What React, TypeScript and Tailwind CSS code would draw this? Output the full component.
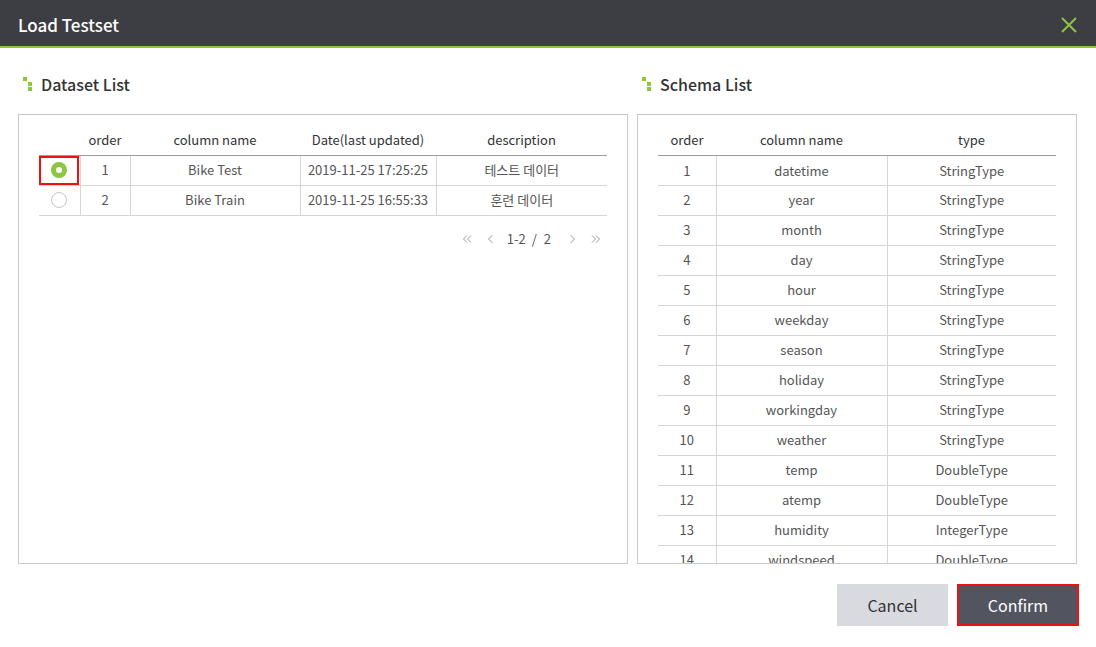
import React from "react";

const datasets = [
  { order: 1, name: "Bike Test", date: "2019-11-25 17:25:25", desc: "테스트 데이터", selected: true },
  { order: 2, name: "Bike Train", date: "2019-11-25 16:55:33", desc: "훈련 데이터", selected: false },
];

const schema = [
  ["datetime", "StringType"],
  ["year", "StringType"],
  ["month", "StringType"],
  ["day", "StringType"],
  ["hour", "StringType"],
  ["weekday", "StringType"],
  ["season", "StringType"],
  ["holiday", "StringType"],
  ["workingday", "StringType"],
  ["weather", "StringType"],
  ["temp", "DoubleType"],
  ["atemp", "DoubleType"],
  ["humidity", "IntegerType"],
  ["windspeed", "DoubleType"],
  ["casual", "IntegerType"],
];

function TitleMark() {
  return (
    <svg width="10" height="14" viewBox="0 0 10 14" className="shrink-0">
      <rect x="0" y="0" width="4" height="4" fill="#8dc63f" />
      <rect x="5" y="5" width="4" height="4" fill="#8dc63f" />
      <rect x="5" y="10" width="4" height="4" fill="#8dc63f" />
    </svg>
  );
}

function SectionTitle({ label }: { label: string }) {
  return (
    <div className="flex h-[22px] items-center gap-[8px] pl-[5px]">
      <TitleMark />
      <h2 className="text-[16px] font-medium text-[#333]">{label}</h2>
    </div>
  );
}

function Radio({ checked }: { checked: boolean }) {
  if (checked) {
    return (
      <span className="flex h-[16px] w-[16px] items-center justify-center rounded-full bg-[#8dc63f]">
        <span className="h-[6px] w-[6px] rounded-full bg-white" />
      </span>
    );
  }
  return <span className="block h-[16px] w-[16px] rounded-full border border-[#c4c4c4] bg-white" />;
}

function Arrow({ d }: { d: string }) {
  return (
    <svg width="12" height="12" viewBox="0 0 12 12" fill="none" stroke="#9a9a9a" strokeWidth="1">
      <path d={d} />
    </svg>
  );
}

const th = "h-[31px] border-b border-[#9d9d9d] p-0 text-center text-[13px] font-normal text-[#333]";
const td = "h-[30px] border-b border-[#d6d6d6] p-0 text-center text-[13px] text-[#555]";

export default function App() {
  return (
    <div
      className="h-[647px] w-[1096px] overflow-hidden bg-white"
      style={{ fontFamily: '"Noto Sans CJK KR", "Noto Sans", sans-serif' }}
    >
      <header className="flex h-[48px] items-center justify-between border-b-2 border-[#8dc63f] bg-[#3d3e44] pl-[18px] pr-[18px] pt-[3px]">
        <h1 className="text-[17px] font-medium text-white">Load Testset</h1>
        <svg width="18" height="18" viewBox="0 0 18 18" stroke="#8dc63f" strokeWidth="2" fill="none">
          <path d="M2 2 L16 16 M16 2 L2 16" />
        </svg>
      </header>

      <div className="flex gap-[9px] px-[18px] pt-[25px]">
        <section className="w-[610px]">
          <SectionTitle label="Dataset List" />
          <div className="mt-[19px] h-[450px] border border-[#c9c9c9] px-[20px] pt-[9px]">
            <table className="w-full table-fixed border-collapse">
              <colgroup>
                <col className="w-[41px]" />
                <col className="w-[50px]" />
                <col className="w-[170px]" />
                <col className="w-[136px]" />
                <col className="w-[171px]" />
              </colgroup>
              <thead>
                <tr>
                  <th className={th}></th>
                  <th className={th}>order</th>
                  <th className={th}>column name</th>
                  <th className={th}>Date(last updated)</th>
                  <th className={th}>description</th>
                </tr>
              </thead>
              <tbody>
                {datasets.map((r) => (
                  <tr key={r.order}>
                    <td className={td}>
                      <div
                        className={
                          r.selected
                            ? "mx-auto flex h-[29px] w-[40px] items-center justify-center border-2 border-[#ee1111]"
                            : "mx-auto flex h-[29px] w-[40px] items-center justify-center"
                        }
                      >
                        <Radio checked={r.selected} />
                      </div>
                    </td>
                    <td className={`${td} border-l`}>{r.order}</td>
                    <td className={`${td} border-l`}>{r.name}</td>
                    <td className={`${td} border-l`}>{r.date}</td>
                    <td className={`${td} border-l`}>{r.desc}</td>
                  </tr>
                ))}
              </tbody>
            </table>

            <div className="mt-[13px] flex h-[20px] items-center justify-end pr-[5px] text-[13px] text-[#555]">
              <Arrow d="M6 2.5 L2.5 6 L6 9.5 M10 2.5 L6.5 6 L10 9.5" />
              <span className="ml-[12px]">
                <Arrow d="M7.5 2 L3.5 6 L7.5 10" />
              </span>
              <span className="ml-[10px]">1-2</span>
              <span className="ml-[6px]">/</span>
              <span className="ml-[7px]">2</span>
              <span className="ml-[15px]">
                <Arrow d="M4.5 2 L8.5 6 L4.5 10" />
              </span>
              <span className="ml-[12px]">
                <Arrow d="M2 2.5 L5.5 6 L2 9.5 M6 2.5 L9.5 6 L6 9.5" />
              </span>
            </div>
          </div>
        </section>

        <section className="w-[440px]">
          <SectionTitle label="Schema List" />
          <div className="mt-[19px] h-[450px] overflow-hidden border border-[#c9c9c9] px-[20px] pt-[9px]">
            <table className="w-full table-fixed border-collapse">
              <colgroup>
                <col className="w-[58px]" />
                <col className="w-[171px]" />
                <col className="w-[169px]" />
              </colgroup>
              <thead>
                <tr>
                  <th className={th}>order</th>
                  <th className={th}>column name</th>
                  <th className={th}>type</th>
                </tr>
              </thead>
              <tbody>
                {schema.map(([name, type], i) => (
                  <tr key={name}>
                    <td className={`${td} ${i === 0 ? "pt-[2px]" : ""}`}>{i + 1}</td>
                    <td className={`${td} border-l ${i === 0 ? "pt-[2px]" : ""}`}>{name}</td>
                    <td className={`${td} border-l ${i === 0 ? "pt-[2px]" : ""}`}>{type}</td>
                  </tr>
                ))}
              </tbody>
            </table>
          </div>
        </section>
      </div>

      <div className="flex justify-end gap-[9px] pr-[17px] pt-[20px]">
        <button className="h-[42px] w-[111px] bg-[#d9dadf] text-[16px] text-[#333]">Cancel</button>
        <button className="h-[42px] w-[122px] border-2 border-[#ee1111] bg-[#52555f] text-[16px] text-white">
          Confirm
        </button>
      </div>
    </div>
  );
}
